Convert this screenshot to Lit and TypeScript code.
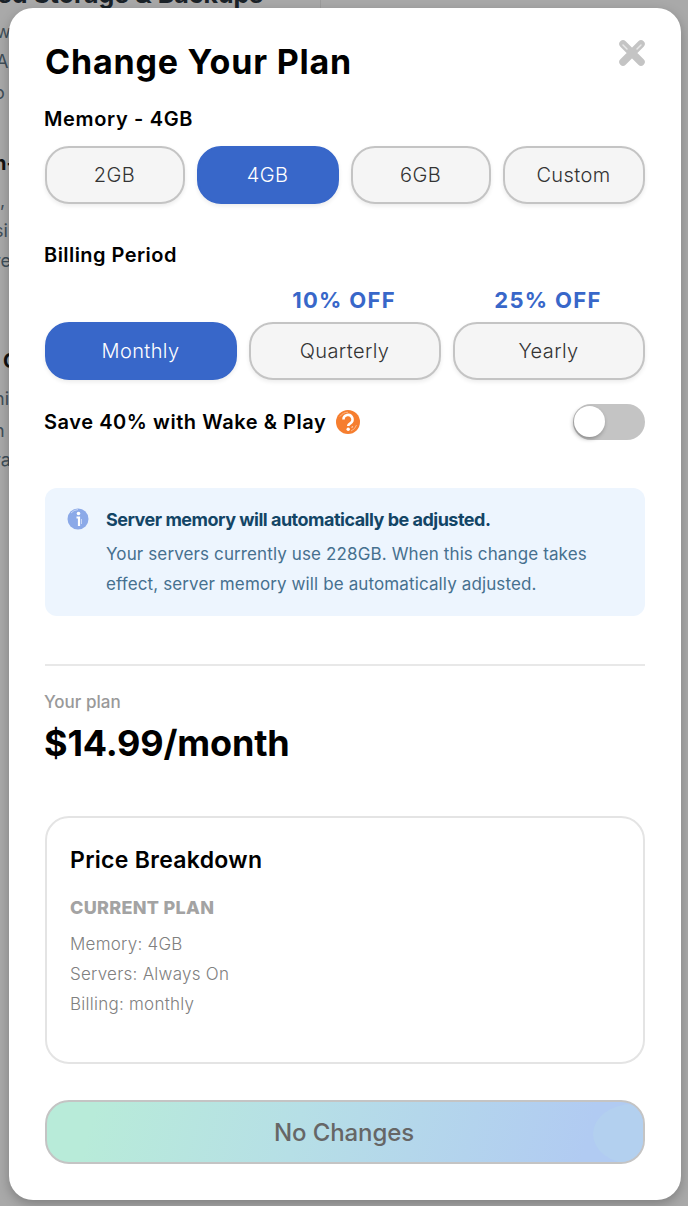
import { LitElement, html, css } from "lit";
import { customElement } from "lit/decorators.js";

@customElement("app-root")
export class AppRoot extends LitElement {
  static styles = css`
    :host { display: block; position: relative; width: 688px; height: 1206px; overflow: hidden; background: #a9a9a9; font-family: Inter, "Liberation Sans", sans-serif; }
    .behind { position: absolute; inset: 0; color: #3f4e58; font-size: 18px; }
    .behind span { position: absolute; white-space: nowrap; }
    .behind .h { font-weight: 700; color: #111; font-size: 20px; }
    .behind .top { font-size: 25px; color: #1a2228; }
    .vline { position: absolute; left: 320px; top: 0; width: 1px; height: 8px; background: #9c9c9c; }
    .modal { position: absolute; left: 9px; top: 8px; width: 672px; height: 1192px; box-sizing: border-box; background: #fff; border-radius: 24px; padding: 0 36px; box-shadow: 0 4px 12px rgba(0,0,0,.25); }
    .head { display: flex; justify-content: space-between; align-items: center; padding-top: 34px; height: 40px; }
    h1 { margin: 0; font-size: 34px; line-height: 40px; font-weight: 700; color: #000; letter-spacing: 0.8px; }
    .close { width: 28px; height: 28px; margin: -18px -1px 0 0; }
    .label { font-size: 20px; line-height: 24px; font-weight: 600; color: #000; margin: 0; }
    .l1 { margin-top: 25px; margin-left: -1px; letter-spacing: .65px; }
    .row { display: grid; gap: 12px; }
    .r4 { grid-template-columns: 140px 142px 140px 142px; margin-top: 15px; }
    .r3 { grid-template-columns: repeat(3, 1fr); }
    .btn { height: 58px; box-sizing: border-box; border: 2px solid #c4c4c4; border-radius: 24px; background: #f5f5f5; color: #333; font-size: 20px; font-weight: 300; letter-spacing: .4px; padding-right: 1px; display: flex; align-items: center; justify-content: center; box-shadow: 0 2px 4px rgba(0,0,0,.08); }
    .btn.on { background: #3867c9; border-color: #3867c9; color: #fff; }
    .l2 { margin-top: 39px; letter-spacing: .45px; margin-left: -1px; }
    .off { margin-top: 19px; height: 28px; line-height: 28px; text-align: center; font-size: 22px; font-weight: 700; color: #3867c9; letter-spacing: 1.3px; }
    .off div { padding-right: 2px; }
    .off-gap { margin-top: 8px; }
    .save { display: flex; align-items: center; justify-content: space-between; margin-top: 24px; height: 36px; }
    .save-l { display: flex; align-items: center; gap: 10px; font-size: 20px; font-weight: 600; color: #000; letter-spacing: .56px; margin-left: -1px; }
    .toggle { width: 72px; height: 36px; border-radius: 18px; background: #c4c4c4; position: relative; }
    .knob { position: absolute; left: 1px; top: 2px; width: 31px; height: 31px; border-radius: 50%; background: #fff; box-shadow: -1px 2px 4px rgba(0,0,0,.3); }
    .info { margin-top: 48px; height: 128px; box-sizing: border-box; background: #edf5fe; border-radius: 12px; display: flex; padding: 17px 22px; gap: 17px; }
    .info svg { flex: none; margin-top: 3px; }
    .info-t { font-size: 18px; line-height: 30px; font-weight: 700; color: #134566; letter-spacing: -.5px; white-space: nowrap; }
    .info-b { font-size: 17px; line-height: 30px; margin-top: 4px; color: #46708f; letter-spacing: .12px; white-space: nowrap; }
    hr { border: 0; height: 2px; background: #e8e8e8; margin: 48px 0 0; }
    .yp { margin-top: 24px; font-size: 17px; line-height: 24px; color: #999; font-weight: 500; margin-left: -1px; }
    .price { margin-top: 7px; font-size: 36px; line-height: 44px; font-weight: 700; color: #000; letter-spacing: -.17px; margin-left: -1px; }
    .card { margin-top: 51px; height: 248px; box-sizing: border-box; border: 2px solid #e4e4e4; border-radius: 24px; padding: 27px 23px; }
    .card h2 { margin: 0; font-size: 23px; line-height: 30px; font-weight: 600; color: #000; letter-spacing: .3px; }
    .cp { margin-top: 21px; font-size: 18px; line-height: 24px; font-weight: 800; color: #a3a3a3; letter-spacing: .3px; }
    .ln { font-size: 17px; line-height: 30px; color: #808080; font-weight: 300; letter-spacing: .25px; }
    .first { margin-top: 9px; }
    .cta { margin-top: 36px; height: 64px; box-sizing: border-box; border: 2px solid #c4c4c4; border-radius: 24px; background: linear-gradient(105deg, #b8ebd9 8%, #b6dfe6 42%, #b1cbf2 90%); display: flex; align-items: center; justify-content: center; font-size: 24px; font-weight: 500; letter-spacing: -.1px; color: #666; position: relative; overflow: hidden; }
    .blob { position: absolute; right: -30px; top: 2px; width: 80px; height: 60px; border-radius: 50%; background: #b3d0ef; }
    .cta span { position: relative; margin-right: 2px; }
  `;

  render() {
    return html`
      <div class="behind" aria-hidden="true">
        <span class="h top" style="left:-12px;top:-21px">ted Storage &amp; Backups</span>
        <div class="vline"></div>
        <span style="left:-4px;top:21px">w</span>
        <span style="left:-4px;top:51px">A</span>
        <span style="left:-6px;top:82px">o</span>
        <span class="h" style="left:-6px;top:151px">n-</span>
        <span style="left:0;top:190px">,</span>
        <span style="left:-6px;top:220px">si</span>
        <span style="left:-6px;top:250px">re</span>
        <span class="h" style="left:3px;top:349px">C</span>
        <span style="left:-6px;top:388px">hi</span>
        <span style="left:-6px;top:420px">n</span>
        <span style="left:-6px;top:449px">ra</span>
      </div>
      <div class="modal">
        <div class="head">
          <h1>Change Your Plan</h1>
          <svg class="close" viewBox="0 0 28 28">
            <path d="M5 5L23 23M23 5L5 23" stroke="#c4c4c4" stroke-width="7.5" stroke-linecap="round"/>
            <path d="M5 6L9 10M19 10L23 6" stroke="#e8e8e8" stroke-width="1.5" stroke-linecap="round"/>
          </svg>
        </div>
        <p class="label l1">Memory - 4GB</p>
        <div class="row r4">
          <div class="btn">2GB</div><div class="btn on">4GB</div><div class="btn">6GB</div><div class="btn">Custom</div>
        </div>
        <p class="label l2">Billing Period</p>
        <div class="row r3 off">
          <div></div><div>10% OFF</div><div>25% OFF</div>
        </div>
        <div class="row r3 off-gap">
          <div class="btn on">Monthly</div><div class="btn">Quarterly</div><div class="btn">Yearly</div>
        </div>
        <div class="save">
          <div class="save-l">
            <span>Save 40% with Wake &amp; Play</span>
            <svg width="24" height="24" viewBox="0 0 24 24">
              <circle cx="12" cy="12" r="12" fill="#f67e2f"/>
              <path d="M4 6.5A10 10 0 0 1 12 2.2" fill="none" stroke="#fbb78a" stroke-width="1"/>
              <path d="M20.5 15A9.5 9.5 0 0 1 15 21" fill="none" stroke="#fbb78a" stroke-width="1"/>
              <path d="M7.5 9.5a4.5 4.5 0 1 1 6.8 3.8c-1.3.8-2.1 1.3-2.1 2.7" fill="none" stroke="#fff" stroke-width="2.6"/>
              <circle cx="12.2" cy="19.2" r="1.7" fill="#fff"/>
              <path d="M15.5 17.5l1.5-1" stroke="#fdd3b8" stroke-width="1.2"/>
            </svg>
          </div>
          <div class="toggle"><div class="knob"></div></div>
        </div>
        <div class="info">
          <svg width="22" height="22" viewBox="0 0 22 22">
            <circle cx="11" cy="11" r="10.5" fill="#8ba9e8"/>
            <path d="M4 5A9.5 9.5 0 0 1 11 1.6" fill="none" stroke="#c7d6f5" stroke-width="1"/>
            <circle cx="11.5" cy="5.5" r="1.8" fill="#fff"/>
            <path d="M9.5 9.5h2.5v8.5" fill="none" stroke="#fff" stroke-width="2.2"/>
            <path d="M14.5 11v5" stroke="#c7d6f5" stroke-width="1"/>
          </svg>
          <div>
            <div class="info-t">Server memory will automatically be adjusted.</div>
            <div class="info-b">Your servers currently use 228GB. When this change takes<br>effect, server memory will be automatically adjusted.</div>
          </div>
        </div>
        <hr />
        <div class="yp">Your plan</div>
        <div class="price">$14.99/month</div>
        <div class="card">
          <h2>Price Breakdown</h2>
          <div class="cp">CURRENT PLAN</div>
          <div class="ln first">Memory: 4GB</div>
          <div class="ln">Servers: Always On</div>
          <div class="ln">Billing: monthly</div>
        </div>
        <div class="cta"><div class="blob"></div><span>No Changes</span></div>
      </div>
    `;
  }
}
